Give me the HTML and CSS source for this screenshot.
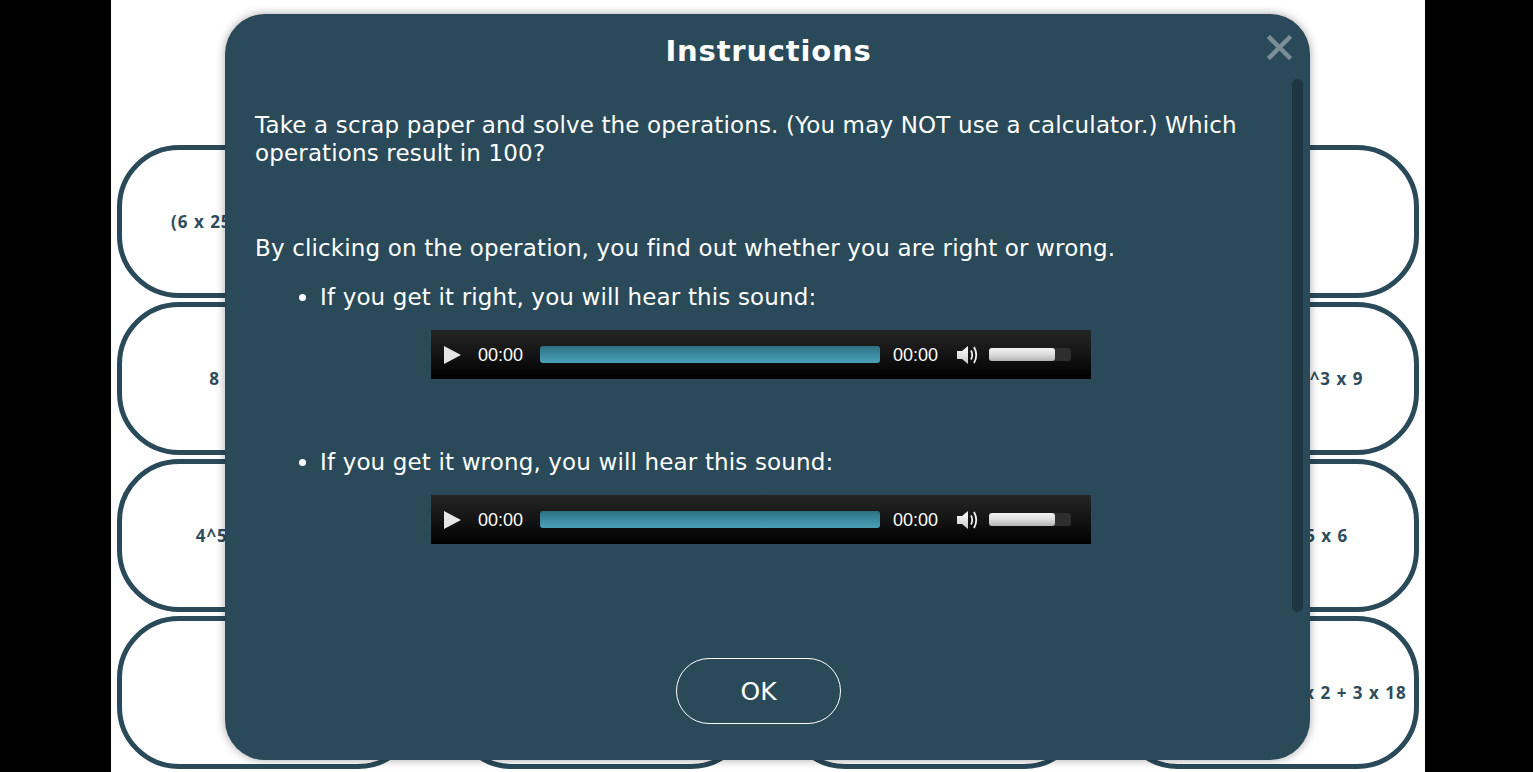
FILE: index.html
```html
<!DOCTYPE html>
<html lang="en">
<head>
<meta charset="utf-8">
<title>Instructions</title>
<link rel="stylesheet" href="styles.css">
</head>
<body>
<div class="stage">
  <div class="cards">
    <div class="card">(6 x 25) - (5 x 20) + 50</div>
    <div class="card">3 x 33 + 1</div>
    <div class="card">25 x 4</div>
    <div class="card">10^2</div>
    <div class="card">8 x 5 + 6 x 10</div>
    <div class="card">1000 : 10</div>
    <div class="card">2 x 50</div>
    <div class="card">(10 + 490)^2 - 2^3 x 9</div>
    <div class="card">4^5 : 4^3 + 9 x 4</div>
    <div class="card">50 + 50</div>
    <div class="card">400 : 4</div>
    <div class="card">100 x 7 + 1 x 5 x 6</div>
    <div class="card">99 + 1</div>
    <div class="card">20 x 5</div>
    <div class="card">101 - 1</div>
    <div class="card">(180 + 2)^2 - 10 x 5 x 2 + 3 x 18</div>
  </div>

  <div class="modal">
    <button class="close" aria-label="Close">
      <svg width="25" height="25" viewBox="0 0 25 25"><path d="M3 3 L22 22 M22 3 L3 22" stroke="#7a8e97" stroke-width="4.5" stroke-linecap="square" fill="none"/></svg>
    </button>
    <div class="modal-head">
      <h1 class="title">Instructions</h1>
    </div>
    <div class="modal-body">
      <div class="content">
        <p class="p-intro">Take a scrap paper and solve the operations. (You may NOT use a calculator.) Which operations result in 100?</p>
        <p class="p-click">By clicking on the operation, you find out whether you are right or wrong.</p>
        <ul class="list">
          <li class="item"><span class="item-text">If you get it right, you will hear this sound:</span>
            <div class="player">
              <span class="play"></span>
              <span class="time t1">00:00</span>
              <span class="rail"></span>
              <span class="time t2">00:00</span>
              <svg class="vol-icon" width="24" height="22" viewBox="0 0 24 22"><defs><linearGradient id="vg1" x1="0" y1="0" x2="0" y2="1"><stop offset="0" stop-color="#ffffff"/><stop offset="1" stop-color="#c8c8c8"/></linearGradient></defs><path d="M1 7 H6 L12 2 V20 L6 15 H1 Z" fill="url(#vg1)"/><path d="M15 6.5 Q17.5 11 15 15.5" stroke="#eee" stroke-width="1.8" fill="none"/><path d="M18 3 Q22.5 11 18 19" stroke="#eee" stroke-width="1.8" fill="none"/></svg>
              <span class="vol"><span class="vol-fill"></span></span>
            </div>
          </li>
          <li class="item item-2"><span class="item-text">If you get it wrong, you will hear this sound:</span>
            <div class="player">
              <span class="play"></span>
              <span class="time t1">00:00</span>
              <span class="rail"></span>
              <span class="time t2">00:00</span>
              <svg class="vol-icon" width="24" height="22" viewBox="0 0 24 22"><defs><linearGradient id="vg2" x1="0" y1="0" x2="0" y2="1"><stop offset="0" stop-color="#ffffff"/><stop offset="1" stop-color="#c8c8c8"/></linearGradient></defs><path d="M1 7 H6 L12 2 V20 L6 15 H1 Z" fill="url(#vg2)"/><path d="M15 6.5 Q17.5 11 15 15.5" stroke="#eee" stroke-width="1.8" fill="none"/><path d="M18 3 Q22.5 11 18 19" stroke="#eee" stroke-width="1.8" fill="none"/></svg>
              <span class="vol"><span class="vol-fill"></span></span>
            </div>
          </li>
        </ul>
      </div>
      <div class="scrollbar"><div class="thumb"></div></div>
    </div>
    <div class="modal-foot">
      <button class="ok">OK</button>
    </div>
  </div>
</div>
</body>
</html>
```

FILE: styles.css
```css
* { box-sizing: border-box; }

html, body {
  margin: 0;
  padding: 0;
  background: #000;
  height: 772px;
  overflow: hidden;
}

.stage {
  position: relative;
  width: 1314px;
  height: 772px;
  margin-left: 111px;
  background: #fff;
  padding: 145px 0 0 6px;
}

.cards {
  display: grid;
  grid-template-columns: repeat(4, 303px);
  grid-auto-rows: 153px;
  column-gap: 30px;
  row-gap: 4px;
}

.card {
  border: 5px solid #2a4a5a;
  border-radius: 62px;
  display: flex;
  align-items: center;
  justify-content: center;
  font-family: "Open Sans", "DejaVu Sans", sans-serif;
  font-weight: 700;
  font-size: 17px;
  letter-spacing: 1px;
  color: #2f4c5b;
  white-space: nowrap;
  background: #fff;
}

.modal {
  position: absolute;
  left: 114px;
  top: 14px;
  width: 1085px;
  height: 746px;
  background: #2a4a5a;
  border-radius: 40px;
  box-shadow: 0 0 10px rgba(0, 0, 0, 0.35);
  display: flex;
  flex-direction: column;
  color: #fff;
  font-family: "DejaVu Sans", Verdana, sans-serif;
}

.close {
  position: absolute;
  left: 1042px;
  top: 21px;
  width: 25px;
  height: 25px;
  padding: 0;
  border: 0;
  background: transparent;
  display: flex;
}

.modal-head {
  height: 65px;
  padding-top: 20px;
}

.title {
  margin: 0;
  text-align: center;
  font-size: 29px;
  letter-spacing: 0.8px;
  line-height: 34px;
  font-weight: 700;
  padding-left: 2px;
}

.modal-body {
  flex: 1;
  display: flex;
  min-height: 0;
}

.content {
  flex: 1;
  padding: 32px 24px 0 30px;
  font-size: 23px;
  letter-spacing: 0.15px;
  line-height: 28px;
}

.content p {
  margin: 0;
}

.p-click {
  margin-top: 67px !important;
}

.list {
  margin: 21px 0 0 0;
  padding: 0 0 0 65px;
}

.item-2 {
  margin-top: 69px;
}

.player {
  width: 660px;
  height: 49px;
  margin: 19px 0 0 111px;
  background: linear-gradient(#252525, #141414 50%, #000);
  display: flex;
  align-items: center;
  padding-left: 13px;
  font-family: "Liberation Sans", Arial, sans-serif;
  font-size: 18px;
  letter-spacing: 0;
  line-height: 20px;
}

.play {
  width: 0;
  height: 0;
  border-top: 9px solid transparent;
  border-bottom: 9px solid transparent;
  border-left: 17px solid #e6e6e6;
}

.time {
  color: #fff;
  width: 46px;
  white-space: nowrap;
}

.t1 { margin-left: 17px; }

.rail {
  margin-left: 16px;
  width: 340px;
  height: 17px;
  border-radius: 3px;
  background: linear-gradient(#2f6f84, #3c8aa0 50%, #4aa1b8);
}

.t2 { margin-left: 13px; }

.vol-icon {
  margin-left: 17px;
  flex: none;
}

.vol {
  margin-left: 9px;
  width: 82px;
  height: 13px;
  border-radius: 3px;
  background: #2e2e2e;
  display: flex;
}

.vol-fill {
  width: 66px;
  height: 13px;
  border-radius: 3px;
  background: linear-gradient(#f2f2f2, #dcdcdc 50%, #b4b4b4);
}

.scrollbar {
  width: 11px;
  margin-right: 7px;
}

.thumb {
  height: 533px;
  border-radius: 6px;
  background: #1e3642;
}

.modal-foot {
  display: flex;
  justify-content: center;
  padding: 0 18px 36px 0;
}

.ok {
  width: 165px;
  height: 66px;
  border: 1px solid #fff;
  border-radius: 33px;
  background: transparent;
  color: #fff;
  font-family: "DejaVu Sans", Verdana, sans-serif;
  font-size: 25px;
  padding: 0;
}
```
